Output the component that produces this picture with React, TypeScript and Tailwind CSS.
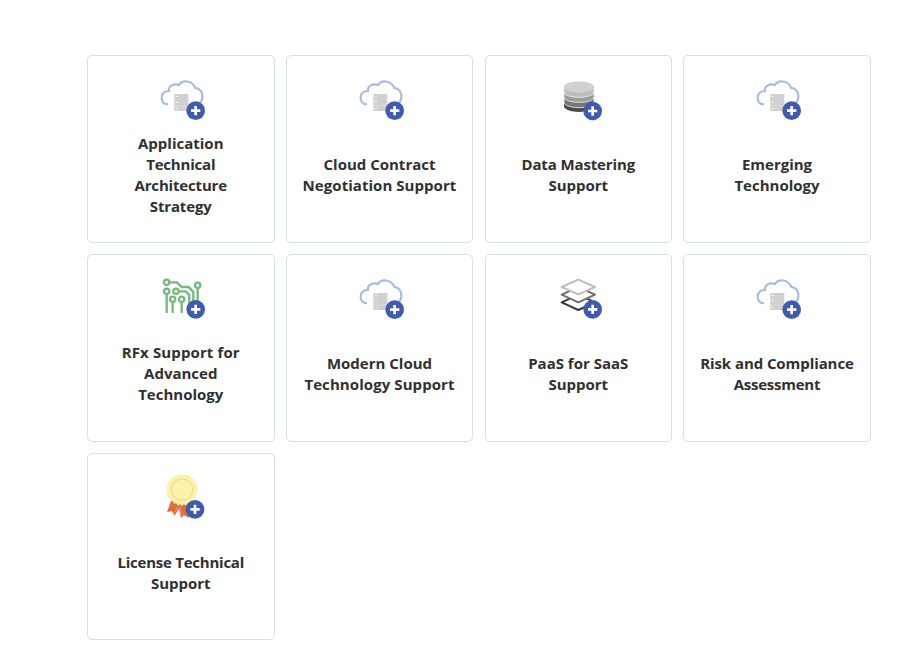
import type { ReactNode } from "react";

function Badge({ x, y }: { x: number; y: number }) {
  return (
    <g>
      <circle cx={x} cy={y} r="28" fill="#3f5bb0" />
      <path d={`M${x - 14} ${y}h28M${x} ${y - 14}v28`} stroke="#fff" strokeWidth="8" />
    </g>
  );
}

function Icon({ children, viewBox = "-2 0 192 180" }: { children: ReactNode; viewBox?: string }) {
  return (
    <svg viewBox={viewBox} className="mt-3.5 block h-[60px] w-16 shrink-0" fill="none">
      {children}
    </svg>
  );
}

function CloudIcon() {
  return (
    <Icon>
      <path
        d="M55 102C43 105 35 94 36 81C37 69 47 62 58 63C56 48 72 39 88 45C97 30 127 29 137 54C150 54 160 68 158 83C157 92 153 98 147 101"
        stroke="#a8bbe3"
        strokeWidth="6.5"
      />
      <path d="M74 72h42v51H74z" fill="#d0d0d0" />
      <path d="M74 90h10M74 108h42" stroke="#e2e2e2" strokeWidth="2" />
      <path d="M78 79h7M78 97h7M78 116h7" stroke="#f5f5f5" strokeWidth="3" />
      <Badge x={138} y={122} />
    </Icon>
  );
}

function DatabaseIcon() {
  return (
    <Icon viewBox="-12 0 192 180">
      <path d="M42 98v11c0 10 20 17 45 17s45-7 45-17V98z" fill="#4c4c4c" />
      <path d="M42 84v12c0 10 20 17 45 17s45-7 45-17V84z" fill="#777" stroke="#eee" strokeWidth="2.5" />
      <path d="M42 68v12c0 10 20 17 45 17s45-7 45-17V68z" fill="#9b9b9b" stroke="#eee" strokeWidth="2.5" />
      <path d="M42 51v14c0 10 20 17 45 17s45-7 45-17V51z" fill="#bdbdbd" stroke="#eee" strokeWidth="2.5" />
      <ellipse cx="87" cy="51" rx="45" ry="17" fill="#d0d0d0" />
      <Badge x={128} y={123} />
    </Icon>
  );
}

function CircuitIcon() {
  return (
    <Icon>
      <g stroke="#79b87c" strokeWidth="7">
        <circle cx="51" cy="40" r="8" />
        <circle cx="51" cy="67" r="8" />
        <circle cx="79" cy="67" r="8" />
        <circle cx="69" cy="91" r="8" />
        <circle cx="96" cy="91" r="8" />
        <circle cx="144" cy="49" r="8" />
        <path d="M60 40h22l14 14h21l14 15v34M51 76v56M69 100v32M96 100v32M88 67h20l11 11v30M144 58v48" />
      </g>
      <Badge x={138} y={121} />
    </Icon>
  );
}

function LayersIcon() {
  return (
    <Icon viewBox="-12 -1 192 180">
      <g strokeWidth="6" strokeLinejoin="round">
        <path d="M35 99L85 76L135 99L85 122Z" stroke="#393939" fill="#fff" />
        <path d="M35 76L85 53L135 76L85 99Z" stroke="#707070" fill="#fff" />
        <path d="M35 53L85 31L135 53L85 75Z" stroke="#bebebe" fill="#fff" />
      </g>
      <Badge x={128} y={120} />
    </Icon>
  );
}

const rosette = Array.from({ length: 48 }, (_, i) => {
  const r = i % 2 ? 44 : 49;
  const a = (i * Math.PI) / 24;
  return `${97 + r * Math.cos(a)},${74 + r * Math.sin(a)}`;
}).join(" ");

function LicenseIcon() {
  return (
    <Icon viewBox="-2 9 192 180">
      <path d="M64 108L52 141L67 139L75 152L88 130L94 159L103 151L118 158L128 112Z" fill="#e36c3c" />
      <path d="M76 143l10-22M91 124l3 25" stroke="#f4a785" strokeWidth="2" />
      <polygon points={rosette} fill="#fcf2ac" />
      <circle cx="97" cy="74" r="32" stroke="#f3d08b" strokeWidth="3" />
      <Badge x={136} y={133} />
    </Icon>
  );
}

const services = [
  { lines: ["Application", "Technical", "Architecture", "Strategy"], Art: CloudIcon },
  { lines: ["Cloud Contract", "Negotiation Support"], Art: CloudIcon },
  { lines: ["Data Mastering", "Support"], Art: DatabaseIcon },
  { lines: ["Emerging", "Technology"], Art: CloudIcon },
  { lines: ["RFx Support for", "Advanced", "Technology"], Art: CircuitIcon },
  { lines: ["Modern Cloud", "Technology Support"], Art: CloudIcon },
  { lines: ["PaaS for SaaS", "Support"], Art: LayersIcon },
  { lines: ["Risk and Compliance", "Assessment"], Art: CloudIcon },
  { lines: ["License Technical", "Support"], Art: LicenseIcon },
];

const lineTracking: Record<string, string> = {
  Technical: "tracking-[-0.2px]",
  Architecture: "tracking-[-0.17px]",
  Strategy: "tracking-[-0.15px]",
  "Negotiation Support": "tracking-[0.05px]",
  "Data Mastering": "tracking-[-0.13px]",
  "RFx Support for": "tracking-[0.12px]",
  "Technology Support": "tracking-[0.08px]",
  "Risk and Compliance": "tracking-[-0.08px]",
  Assessment: "tracking-[-0.25px]",
  "License Technical": "tracking-[-0.24px]",
};

export default function App() {
  return (
    <main className="h-[655px] w-[921px] overflow-hidden bg-white pt-[55px] pl-[87px] font-['Segoe_UI','Open_Sans',sans-serif]">
      <div className="grid w-[783.75px] grid-cols-4 gap-x-[11.25px] gap-y-[11px]">
        {services.map(({ lines, Art }) => (
          <article
            key={lines.join(" ")}
            className="flex h-[187.75px] flex-col items-center rounded-[5px] border border-[#d5dfe6]"
          >
            <Art />
            <h3 className="mt-[3px] flex h-[84px] flex-col justify-center text-center text-[15px] leading-[21px] font-bold whitespace-nowrap text-[#303030]">
              {lines.map((line) => (
                <span key={line} className={lineTracking[line]}>
                  {line}
                </span>
              ))}
            </h3>
          </article>
        ))}
      </div>
    </main>
  );
}
